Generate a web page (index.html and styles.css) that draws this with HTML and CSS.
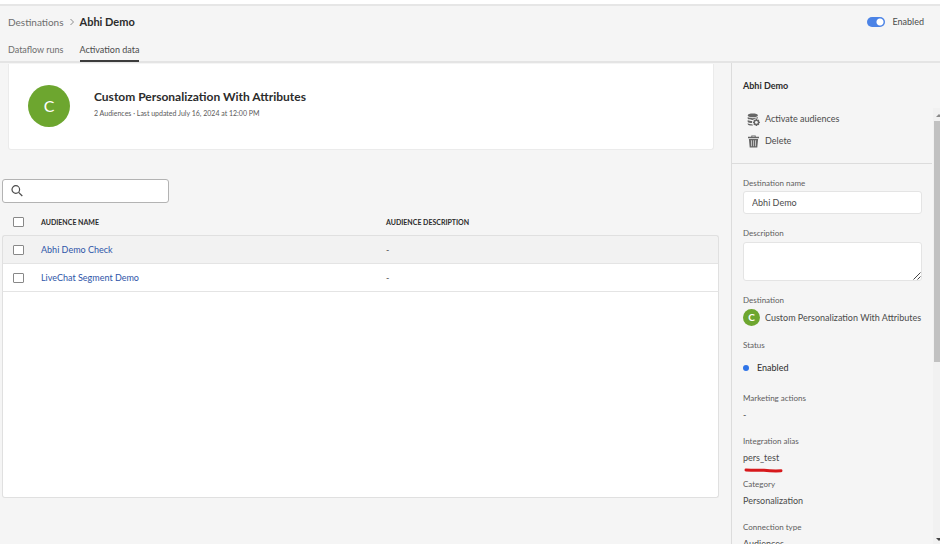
FILE: index.html
```html
<!DOCTYPE html>
<html lang="en">
<head>
<meta charset="utf-8">
<title>Destinations</title>
<link rel="stylesheet" href="styles.css">
</head>
<body>
<header class="header">
  <div class="header-row">
    <nav class="breadcrumb" aria-label="Breadcrumb">
      <a href="#">Destinations</a>
      <svg class="chevron" viewBox="0 0 6 8" aria-hidden="true"><path d="M1.5 1 4.5 4l-3 3"/></svg>
      <strong>Abhi Demo</strong>
    </nav>
    <label class="toggle"><input type="checkbox" role="switch" checked><span>Enabled</span></label>
  </div>
  <nav class="tabs" aria-label="Views">
    <a href="#">Dataflow runs</a>
    <a href="#" class="active" aria-current="page">Activation data</a>
  </nav>
</header>
<div class="body">
  <main class="main">
    <section class="card">
      <span class="avatar">C</span>
      <div class="card-text">
        <h1>Custom Personalization With Attributes</h1>
        <p>2 Audiences · Last updated July 16, 2024 at 12:00 PM</p>
      </div>
    </section>
    <div class="search">
      <svg viewBox="0 0 12 12" aria-hidden="true"><circle cx="4.800" cy="4.500" r="3.800"/><path d="m7.600 7.300 3.700 3.700"/></svg>
      <input type="search" aria-label="Search audiences">
    </div>
    <table class="audiences">
      <thead>
        <tr><th class="check"><input type="checkbox" aria-label="Select all"></th><th class="name">Audience name</th><th>Audience description</th></tr>
      </thead>
      <tbody>
        <tr class="hovered"><td class="check"><input type="checkbox" aria-label="Select Abhi Demo Check"></td><td><a href="#">Abhi Demo Check</a></td><td>-</td></tr>
        <tr><td class="check"><input type="checkbox" aria-label="Select LiveChat Segment Demo"></td><td><a href="#">LiveChat Segment Demo</a></td><td>-</td></tr>
      </tbody>
    </table>
    <div class="table-rest"></div>
  </main>
  <aside class="panel">
    <h2>Abhi Demo</h2>
    <div class="panel-scroll">
      <div class="actions">
        <button type="button">
          <svg viewBox="0 0 13 13" aria-hidden="true"><path d="M.7 2.400C.7 1.200 3 .6 5.800.6s5.100.6 5.100 1.800S8.600 4.200 5.800 4.200.7 3.600.7 2.400zM.7 4.100c1.800 1.400 8.400 1.400 10.200 0v1.300H8.500C7.500 5.500 6.600 6 6 6.900 3.600 6.900 1.500 6.500.7 5.700zM.7 7.100c1.200.8 2.900 1 4.600 1-.3.600-.4 1.200-.3 1.900C3.300 10 1.400 9.700.7 8.900zM.7 10.200c1.200.8 2.900 1 4.600 1 .2.600.4 1 .8 1.300C3.500 12.700.7 12.200.7 11z"/><path class="teeth" d="M9.400 5.900v7M5.900 9.400h7M6.900 6.900l5 5M11.900 6.900l-5 5"/><circle cx="9.400" cy="9.400" r="2.900"/><circle class="hole" cx="9.400" cy="9.400" r="1.400"/></svg>
          Activate audiences
        </button>
        <button type="button">
          <svg viewBox="0 0 13 13" aria-hidden="true"><path fill-rule="evenodd" d="M4.300.5h4.400v1.300H12v1.500H1V1.800h3.300zM5.300 1.200v.6h2.400v-.6zM1.900 4h9.200l-.8 8.500H2.700zM3.900 5.200l.4 6h.6l-.3-6zM6.200 5.200v6h.6v-6zM8.400 5.200l-.3 6h.6l.4-6z"/></svg>
          Delete
        </button>
      </div>
      <div class="details">
        <div class="field">
          <label for="dest-name">Destination name</label>
          <input id="dest-name" type="text" value="Abhi Demo">
        </div>
        <div class="field">
          <label for="desc">Description</label>
          <div class="area">
            <textarea id="desc"></textarea>
            <svg viewBox="0 0 8 8" aria-hidden="true"><path d="M.5 7.500l7-7M4.500 7.500l3-3"/></svg>
          </div>
        </div>
        <dl>
          <div class="item destination"><dt>Destination</dt><dd><span class="avatar small">C</span>Custom Personalization With Attributes</dd></div>
          <div class="item status"><dt>Status</dt><dd>Enabled</dd></div>
          <div class="item"><dt>Marketing actions</dt><dd>-</dd></div>
          <div class="item"><dt>Integration alias</dt><dd class="marked">pers_test<svg viewBox="0 0 40 5" aria-hidden="true"><path d="M2 2q8 .6 18 .2 8 1 17 .6"/></svg></dd></div>
          <div class="item"><dt>Category</dt><dd>Personalization</dd></div>
          <div class="item"><dt>Connection type</dt><dd>Audiences</dd></div>
        </dl>
      </div>
      <div class="scrollbar" aria-hidden="true">
        <svg viewBox="0 0 7 13"><path class="up" d="M3 9 6 6l3 3z"/></svg>
        <div class="thumb"></div>
        <svg viewBox="0 0 7 13"><path d="M3 7h6l-3 3z"/></svg>
      </div>
    </div>
  </aside>
</div>
</body>
</html>
```
FILE: styles.css
```css
* { box-sizing: border-box; }

body {
  margin: 0;
  height: 100vh;
  overflow: hidden;
  display: flex;
  flex-direction: column;
  background: #f5f5f5;
  color: #4b4b4b;
  font: 9px/14px Lato, sans-serif;
}

h1, h2, p, dl, dd { margin: 0; }
a { color: inherit; text-decoration: none; }
input, button, textarea { font: inherit; color: inherit; margin: 0; }

.header {
  border-top: 4px solid #fff;
  border-bottom: 2px solid #e4e4e4;
  box-shadow: inset 0 2px #e6e6e6;
  padding: 8px 16px 0 8px;
}
.header-row { display: flex; justify-content: space-between; align-items: center; height: 20px; }
.breadcrumb { display: flex; align-items: center; gap: 5px; font-size: 10px; color: #6e6e6e; }
.breadcrumb strong { color: #2c2c2c; font-size: 11px; font-weight: 700; }
.chevron { width: 6px; height: 8px; fill: none; stroke: #8e8e8e; }
.toggle { display: flex; align-items: center; gap: 7px; }
.toggle input {
  appearance: none;
  width: 18px;
  height: 10px;
  border-radius: 5px;
  background: radial-gradient(circle at 13px 5px, #fff 3px, #4b83e6 4px);
}
.tabs { display: flex; gap: 16px; height: 29px; padding-top: 10px; color: #6e6e6e; }
.tabs a { height: 20px; line-height: 16px; }
.tabs .active { color: #4b4b4b; border-bottom: 2px solid #3c3c3c; }

.body { flex: 1; display: flex; min-height: 0; }
.main { flex: 1; min-width: 0; display: flex; flex-direction: column; padding: 1px 12px 46px 2px; }

.card {
  display: flex;
  align-items: center;
  gap: 24px;
  height: 86px;
  margin: 0 5px 29px 6px;
  padding: 0 19px 2px;
  background: #fff;
  border: 1px solid #ebebeb;
  border-top: 0;
  border-radius: 0 0 3px 3px;
}
.card-text { padding-bottom: 4px; }
.card h1 { font-size: 12px; line-height: 18px; font-weight: 700; color: #2c2c2c; }
.card p { font-size: 7px; color: #5a5a5a; }
.avatar {
  flex: none;
  width: 42px;
  height: 42px;
  border-radius: 50%;
  background: #6da62f;
  color: #fff;
  text-align: center;
  font-size: 16px;
  line-height: 42px;
}
.avatar.small { width: 17px; height: 17px; font-size: 10px; line-height: 17px; font-weight: 700; }

.search {
  display: flex;
  align-items: center;
  gap: 6px;
  width: 167px;
  height: 24px;
  padding: 0 8px;
  background: #fff;
  border: 1px solid #b3b3b3;
  border-radius: 3px;
}
.search svg { flex: none; width: 12px; height: 12px; fill: none; stroke: #4b4b4b; stroke-width: 1.2; }
.search input { flex: 1; min-width: 0; border: 0; outline: 0; background: none; }

.audiences { width: 100%; margin-top: 6px; border-spacing: 0; table-layout: fixed; }
.audiences th { height: 26px; padding: 0; text-align: left; font-size: 7px; font-weight: 700; line-height: 14px; color: #2c2c2c; text-transform: uppercase; }
.audiences .check { width: 39px; padding-left: 11px; }
.audiences .name { width: 345px; }
.audiences td { height: 28px; padding: 0; background: #fff; border-bottom: 1px solid #e4e4e4; }
.audiences td:first-child { border-left: 1px solid #e0e0e0; }
.audiences td:last-child { border-right: 1px solid #e0e0e0; }
.audiences .hovered td { height: 29px; background: #f2f2f2; border-top: 1px solid #e0e0e0; }
.hovered td:first-child { border-top-left-radius: 3px; }
.hovered td:last-child { border-top-right-radius: 3px; }
.audiences a { color: #2e55a8; }
.audiences td.check { padding-left: 10px; }
.audiences input { appearance: none; display: block; width: 11px; height: 10px; background: #fff; border: 1px solid #888; border-radius: 1px; }
.table-rest { flex: 1; background: #fff; border: 1px solid #e0e0e0; border-top: 0; border-radius: 0 0 3px 3px; }

.panel { width: 209px; display: flex; flex-direction: column; border-left: 1px solid #dcdcdc; }
.panel h2 { height: 45px; padding: 16px 11px 0; font-size: 9px; line-height: 14px; font-weight: 700; color: #2c2c2c; }
.panel-scroll { flex: 1; min-height: 0; position: relative; overflow: hidden; }
.actions { margin-right: 8px; padding-bottom: 11px; border-bottom: 1px solid #dcdcdc; }
.actions button { display: flex; align-items: center; gap: 5px; height: 22px; padding: 0 15px; background: none; border: 0; color: #4b4b4b; }
.actions svg { width: 13px; height: 13px; fill: #666; }
.actions .teeth { stroke: #666; stroke-width: 1.3; }
.actions .hole { fill: #f5f5f5; }
.details { padding: 12px 18px 0 11px; }
.field { margin-bottom: 12px; }
.field label, dt { display: block; font-size: 8px; line-height: 14px; color: #5e5e5e; }
.field input, .field textarea { display: block; width: 100%; background: #fff; border: 1px solid #e4e4e4; border-radius: 3px; outline: 0; resize: none; }
.field input { height: 23px; margin-top: 1px; padding: 0 8px; }
.area { position: relative; margin-top: 2px; }
.field textarea { height: 39px; }
.area svg { position: absolute; right: 1px; bottom: 1px; width: 8px; height: 8px; fill: none; stroke: #444; }
.item { margin-bottom: 10px; }
.item dd { height: 19px; line-height: 19px; white-space: nowrap; }
.destination { margin-bottom: 11px; }
.destination dd { display: flex; align-items: center; gap: 5px; height: 20px; }
.status { margin-bottom: 13px; }
.status dd { display: flex; align-items: center; gap: 8px; height: 26px; padding-top: 5px; color: #2c2c2c; }
.status dd::before { content: ""; width: 6px; height: 6px; border-radius: 50%; background: #2f74e8; }
.marked { position: relative; }
.marked svg { position: absolute; left: 1px; top: 20px; width: 40px; height: 5px; fill: none; stroke: #d7191c; stroke-width: 3; stroke-linecap: round; }

.scrollbar { position: absolute; inset: 0 0 0 auto; width: 7px; display: flex; flex-direction: column; justify-content: space-between; background: #f1f1f1; }
.scrollbar svg { width: 7px; height: 13px; fill: #444; }
.scrollbar .up { fill: #8a8a8a; }
.thumb { height: 241px; margin: 0 0 auto 1px; background: #c1c1c1; }
```
